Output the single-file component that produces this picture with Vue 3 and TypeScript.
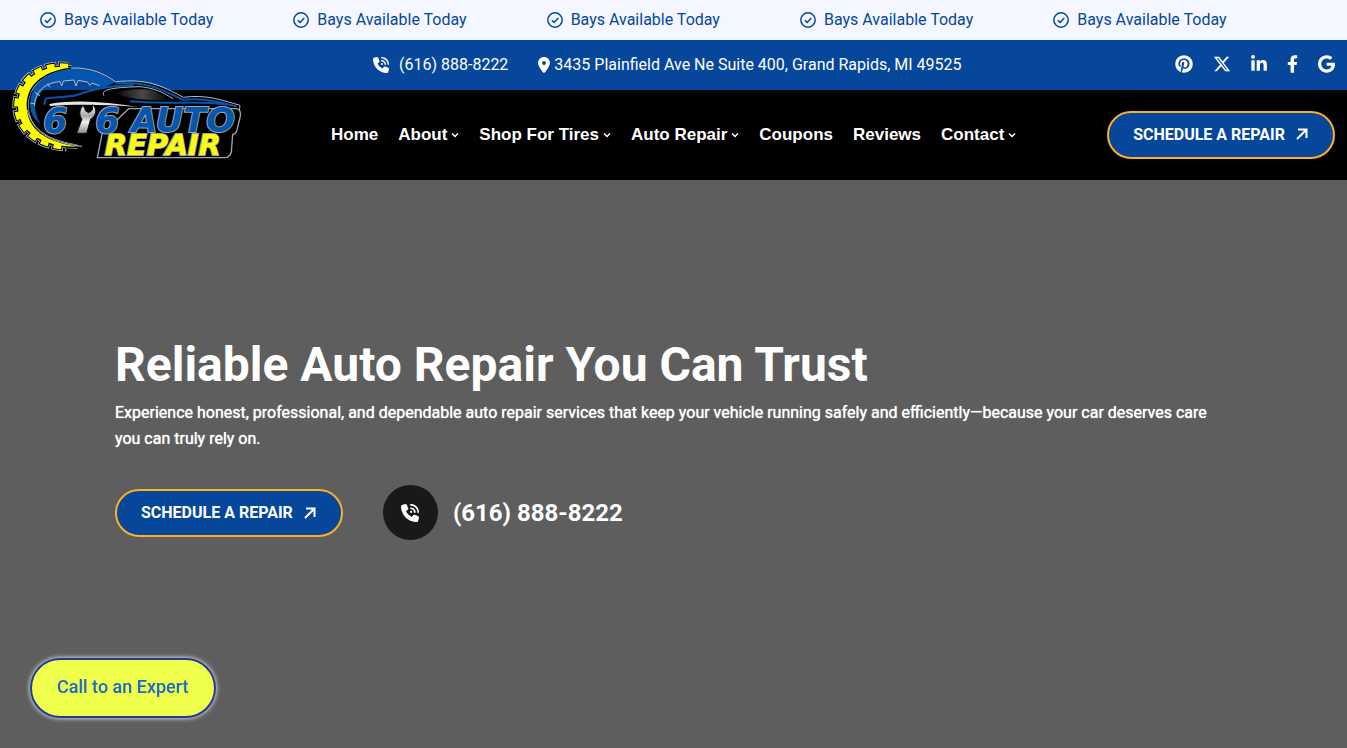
<script setup lang="ts">
interface NavItem {
  label: string
  menu?: boolean
}

interface Social {
  label: string
  box: string
  width: number
  path: string
}

const notices: string[] = Array.from({ length: 5 }, () => 'Bays Available Today')

const navItems: NavItem[] = [
  { label: 'Home' },
  { label: 'About', menu: true },
  { label: 'Shop For Tires', menu: true },
  { label: 'Auto Repair', menu: true },
  { label: 'Coupons' },
  { label: 'Reviews' },
  { label: 'Contact', menu: true },
]

const gearCrescent =
  'M214 52C110 40 54 100 54 168C54 240 120 290 232 290C140 276 80 240 80 166C80 110 120 66 214 52Z'
const gearTeeth = 'M204 48C110 36 49 98 49 168C49 238 112 290 200 292'

const phonePath =
  'M280 0C408.1 0 512 103.9 512 232c0 13.3-10.7 24-24 24s-24-10.7-24-24c0-101.6-82.4-184-184-184c-13.3 0-24-10.7-24-24s10.7-24 24-24zm8 192a32 32 0 1 1 0 64 32 32 0 1 1 0-64zm-32-72c0-13.3 10.7-24 24-24c75.1 0 136 60.9 136 136c0 13.3-10.7 24-24 24s-24-10.7-24-24c0-48.6-39.4-88-88-88c-13.3 0-24-10.7-24-24zM117.5 1.4c19.4-5.3 39.7 4.6 47.4 23.2l40 96c6.8 16.3 2.1 35.2-11.6 46.3L144 207.3c33.3 70.4 90.3 127.4 160.7 160.7L345 318.7c11.2-13.7 30-18.4 46.3-11.6l96 40c18.6 7.7 28.5 28 23.2 47.4l-24 88C481.8 499.9 466 512 448 512C200.6 512 0 311.4 0 64C0 46 12.1 30.2 29.5 25.4l88-24z'

const socials: Social[] = [
  {
    label: 'Pinterest',
    box: '0 0 496 512',
    width: 18,
    path: 'M496 256c0 137-111 248-248 248-25.6 0-50.2-3.9-73.4-11.1 10.1-16.5 25.2-43.5 30.8-65 3-11.6 15.4-59 15.4-59 8.1 15.4 31.7 28.5 56.8 28.5 74.8 0 128.7-68.8 128.7-154.3 0-81.9-66.9-143.2-152.9-143.2-107 0-163.9 71.8-163.9 150.1 0 36.4 19.4 81.7 50.3 96.1 4.7 2.2 7.2 1.2 8.3-3.3.8-3.4 5-20.3 6.9-28.1.6-2.5.3-4.7-1.7-7.1-10.1-12.5-18.3-35.3-18.3-56.6 0-54.7 41.4-107.6 112-107.6 60.9 0 103.6 41.5 103.6 100.9 0 67.1-33.9 113.6-78 113.6-24.3 0-42.6-20.1-36.7-44.8 7-29.5 20.5-61.3 20.5-82.6 0-19-10.2-34.9-31.4-34.9-24.9 0-44.9 25.7-44.9 60.2 0 22 7.4 36.8 7.4 36.8s-24.5 103.8-29 123.2c-5 21.4-3 51.6-.9 71.2C65.4 450.9 0 361.1 0 256 0 119 111 8 248 8s248 111 248 248z',
  },
  {
    label: 'X',
    box: '0 0 512 512',
    width: 18,
    path: 'M389.2 48h70.6L305.6 224.2 487 464H345L233.7 318.6 106.5 464H35.8L200.7 275.5 26.8 48H172.4L272.9 180.9 389.2 48zM364.4 421.8h39.1L151.1 88h-42L364.4 421.8z',
  },
  {
    label: 'LinkedIn',
    box: '0 0 448 512',
    width: 16,
    path: 'M100.28 448H7.4V148.9h92.88zM53.79 108.1C24.09 108.1 0 83.5 0 53.8a53.79 53.79 0 0 1 107.58 0c0 29.7-24.1 54.3-53.79 54.3zM447.9 448h-92.68V302.4c0-34.7-.7-79.2-48.29-79.2-48.29 0-55.69 37.7-55.69 76.7V448h-92.78V148.9h89.08v40.8h1.3c12.4-23.5 42.69-48.3 87.88-48.3 94 0 111.28 61.9 111.28 142.3V448z',
  },
  {
    label: 'Facebook',
    box: '0 0 320 512',
    width: 11,
    path: 'M279.14 288l14.22-92.66h-88.91v-60.13c0-25.35 12.42-50.06 52.24-50.06h40.42V6.26S260.43 0 225.36 0c-73.22 0-121.08 44.38-121.08 124.72v70.62H22.89V288h81.39v224h100.17V288z',
  },
  {
    label: 'Google',
    box: '0 0 488 512',
    width: 17,
    path: 'M488 261.8C488 403.3 391.1 504 248 504 110.8 504 0 393.2 0 256S110.8 8 248 8c66.8 0 123 24.5 166.3 64.9l-67.5 64.9C258.5 52.6 94.3 116.6 94.3 256c0 86.5 69.1 156.6 153.7 156.6 98.2 0 135-70.4 140.8-106.9H248v-85.3h236.1c2.3 12.7 3.9 24.9 3.9 41.4z',
  },
]
</script>

<template>
  <div class="page">
    <div class="notices">
      <span v-for="(notice, i) in notices" :key="i" class="notice">
        <svg class="notice-icon" viewBox="0 0 16 16" aria-hidden="true">
          <circle cx="8" cy="8" r="7.2" />
          <path d="M4.8 8.2l2.3 2.2 4.2-4.5" />
        </svg>
        <span class="label">{{ notice }}</span>
      </span>
    </div>

    <header class="header">
      <a class="logo" href="#" aria-label="616 Auto Repair">
        <svg viewBox="36 33 696 294" aria-hidden="true">
          <defs>
            <linearGradient id="steel" x1="0" y1="0" x2="0" y2="1">
              <stop offset="0" stop-color="#f2f2f2" />
              <stop offset="0.4" stop-color="#a8a8a8" />
              <stop offset="0.6" stop-color="#f2f2f2" />
              <stop offset="1" stop-color="#8a8a8a" />
            </linearGradient>
            <linearGradient id="glass" x1="0" y1="0" x2="1" y2="0">
              <stop offset="0" stop-color="#000" />
              <stop offset="0.5" stop-color="#4a4a4a" />
              <stop offset="1" stop-color="#000" />
            </linearGradient>
          </defs>
          <g class="gear gear-silver"><path class="teeth" :d="gearTeeth" /><path class="ring" :d="gearCrescent" /></g>
          <g class="gear gear-black"><path class="teeth" :d="gearTeeth" /><path class="ring" :d="gearCrescent" /></g>
          <g class="gear gear-yellow"><path class="teeth" :d="gearTeeth" /><path class="ring" :d="gearCrescent" /></g>
          <path class="blue" d="M90 160C94 100 140 62 214 56C270 56 312 76 346 97L306 112C276 98 240 92 206 92C150 94 112 124 104 168C106 190 112 206 122 222C98 204 90 186 90 160Z" />
          <path class="body" d="M130 168L138 142L224 136L306 116L346 97C430 88 480 106 548 141C620 134 660 146 718 168L724 182H130Z" />
          <path class="wire" d="M104 168C104 128 132 98 180 95L185 108L190 93L222 90L228 108L234 91L262 96L270 106L276 99L298 107M92 160L104 161M106 128L120 137M142 101L150 112" />
          <path class="blue-line" d="M132 164L138 145L224 137C280 118 330 105 400 106M346 100C430 94 470 110 548 149C610 143 660 154 710 170M390 154C500 165 590 150 680 164" />
          <path class="car-glass" d="M342 130C380 116 430 115 462 122L510 150C440 154 380 144 342 130Z" />
          <path class="wire" d="M214 54C270 52 312 70 346 95C440 86 480 104 550 142C620 132 670 152 720 166L718 182M312 137C300 118 340 112 420 110C480 116 502 138 520 146" />
          <path class="steel-line" d="M148 162C230 148 320 156 414 171C320 163 220 162 150 168Z" />
          <path class="wire" d="M82 180C96 240 144 278 246 289" />
          <path class="panel" d="M386 176L708 176Q724 178 721 198L711 240Q707 252 698 254L694 306Q690 321 676 323L292 323L306 253Z" />
          <g class="word">
            <text class="fill-blue" x="130" y="248" font-size="104">6</text>
            <text class="fill-blue" x="286" y="248" font-size="104">6</text>
            <text class="fill-yellow" x="314" y="315" font-size="87">REPAIR</text>
            <text class="fill-blue" x="394" y="246" font-size="101">AUTO</text>
          </g>
          <path class="wrench" d="M250 166L257 183L266 188L277 180L278 164C292 176 290 198 272 207L260 250L230 250L246 207C236 196 238 178 250 166Z" />
        </svg>
      </a>

      <div class="topbar">
        <div class="contacts">
          <a class="phone" href="tel:6168888222">
            <svg class="phone-icon" viewBox="0 0 512 512" aria-hidden="true"><path :d="phonePath" /></svg>
            <span class="label">(616) 888-8222</span>
          </a>
          <a class="address" href="#">
            <svg class="pin-icon" viewBox="0 0 384 512" aria-hidden="true">
              <path d="M215.7 499.2C267 435 384 279.4 384 192C384 86 298 0 192 0S0 86 0 192c0 87.4 117 243 168.3 307.2c12.3 15.3 35.1 15.3 47.4 0zM192 128a64 64 0 1 1 0 128 64 64 0 1 1 0-128z" />
            </svg>
            <span class="label">3435 Plainfield Ave Ne Suite 400, Grand Rapids, MI 49525</span>
          </a>
        </div>
        <div class="socials">
          <a v-for="s in socials" :key="s.label" href="#" :aria-label="s.label">
            <svg :viewBox="s.box" :width="s.width" height="18" aria-hidden="true"><path :d="s.path" /></svg>
          </a>
        </div>
      </div>

      <div class="navbar">
        <nav class="nav">
          <a v-for="item in navItems" :key="item.label" href="#">
            {{ item.label }}
            <svg v-if="item.menu" class="chevron" viewBox="0 0 8 8" aria-hidden="true"><path d="M1 2.5l3 3 3-3" /></svg>
          </a>
        </nav>
        <a class="cta" href="#">
          SCHEDULE A REPAIR
          <svg class="arrow" viewBox="0 0 12 12" aria-hidden="true"><path d="M1 11L10.500 1.500M2 1.500h8.500v8.500" /></svg>
        </a>
      </div>
    </header>

    <main class="hero">
      <h1>Reliable Auto Repair You Can Trust</h1>
      <p>
        Experience honest, professional, and dependable auto repair services that keep your vehicle
        running safely and efficiently—because your car deserves care you can truly rely on.
      </p>
      <div class="actions">
        <a class="cta" href="#">
          SCHEDULE A REPAIR
          <svg class="arrow" viewBox="0 0 12 12" aria-hidden="true"><path d="M1 11L10.500 1.500M2 1.500h8.500v8.500" /></svg>
        </a>
        <a class="call" href="tel:6168888222">
          <span class="call-disc">
            <svg viewBox="0 0 512 512" aria-hidden="true"><path :d="phonePath" /></svg>
          </span>
          (616) 888-8222
        </a>
      </div>
    </main>

    <a class="expert" href="tel:6168888222">Call to an Expert</a>
  </div>
</template>

<style>
body {
  margin: 0;
  background: #5e5e5e;
}
</style>

<style scoped>
.page {
  display: flex;
  flex-direction: column;
  min-height: 100vh;
  overflow: hidden;
  background: #5e5e5e;
  color: #fff;
  font-family: Roboto, "Liberation Sans", sans-serif;
  font-size: 16px;
}

.page * {
  box-sizing: border-box;
}

a {
  color: inherit;
  text-decoration: none;
}

svg {
  display: block;
  flex: none;
  fill: currentColor;
}

.notices {
  display: flex;
  gap: 80px;
  height: 40px;
  padding: 0 40px;
  background: #f4f7ff;
  color: #06469b;
}

.notice {
  display: flex;
  flex: none;
  align-items: center;
  gap: 8px;
  white-space: nowrap;
}

.label {
  padding-bottom: 2px;
}

.notice-icon {
  width: 16px;
  height: 16px;
  fill: none;
  stroke: currentColor;
  stroke-width: 1.5;
}

.header {
  position: relative;
}

.logo {
  position: absolute;
  top: 21px;
  left: 12px;
  width: 232px;
}

.logo svg {
  overflow: visible;
}

.topbar {
  display: flex;
  align-items: center;
  justify-content: space-between;
  height: 50px;
  padding: 0 12px 0 373px;
  background: #06469b;
}

.contacts {
  display: flex;
  gap: 30px;
  white-space: nowrap;
}

.phone,
.address {
  display: flex;
  align-items: center;
  gap: 10px;
}

.address {
  gap: 4px;
}

.phone-icon {
  width: 16px;
  height: 16px;
}

.pin-icon {
  width: 12px;
  height: 16px;
}

.socials {
  display: flex;
  align-items: center;
  gap: 20px;
  padding-bottom: 2px;
}

.navbar {
  display: flex;
  align-items: center;
  justify-content: space-between;
  height: 90px;
  padding: 0 12px 0 331px;
  background: #000;
}

.nav {
  display: flex;
  gap: 20px;
  font-family: "Liberation Sans", Arial, sans-serif;
  font-size: 17px;
  font-weight: 700;
  white-space: nowrap;
}

.nav a {
  display: flex;
  align-items: center;
  gap: 4px;
}

.chevron {
  width: 8px;
  height: 8px;
  fill: none;
  stroke: currentColor;
  stroke-width: 1.5;
}

.cta {
  display: flex;
  align-items: center;
  gap: 11px;
  height: 48px;
  padding: 0 25px 2px 24px;
  border: 2px solid #fdb021;
  border-radius: 24px;
  background: #06469b;
  font-weight: 700;
  white-space: nowrap;
}

.actions .cta {
  padding-bottom: 0;
}

.arrow {
  width: 12px;
  height: 12px;
  fill: none;
  stroke: currentColor;
  stroke-width: 2;
}

.hero {
  flex: 1;
  padding: 156px 115px 40px;
}

h1 {
  margin: 0;
  font-size: 48px;
  line-height: 58px;
  font-weight: 700;
}

p {
  margin: 6px 0 33px;
  line-height: 26px;
  text-shadow: 0 0 1px currentColor;
}

.actions {
  display: flex;
  align-items: center;
  gap: 40px;
}

.call {
  display: flex;
  align-items: center;
  gap: 15px;
  font-size: 24px;
  font-weight: 700;
}

.call-disc {
  display: grid;
  place-items: center;
  width: 55px;
  height: 55px;
  border-radius: 50%;
  background: #191919;
}

.call-disc svg {
  width: 18px;
  height: 18px;
}

.expert {
  position: fixed;
  bottom: 30px;
  left: 30px;
  padding: 0 25px 2px;
  border: 2px solid #1f3c96;
  border-radius: 30px;
  background: #f0ff4b;
  box-shadow: 0 0 5px #fff;
  color: #1b69c8;
  font-size: 18px;
  font-weight: 500;
  line-height: 54px;
}

.gear .teeth {
  fill: none;
}

.gear-silver {
  fill: #b4bcc8;
  stroke: #b4bcc8;
}

.gear-silver .teeth {
  stroke-width: 24;
  stroke-dasharray: 34 6;
  stroke-dashoffset: 5;
}

.gear-silver .ring {
  stroke-width: 12;
}

.gear-black {
  fill: #000;
  stroke: #000;
}

.gear-black .teeth {
  stroke-width: 19;
  stroke-dasharray: 30 10;
  stroke-dashoffset: 3;
}

.gear-black .ring {
  stroke-width: 8;
}

.gear-yellow {
  fill: #fbfc04;
}

.gear-yellow .teeth {
  stroke: #fbfc04;
  stroke-width: 13;
  stroke-dasharray: 24 16;
}

.body {
  fill: #000;
}

.blue {
  fill: #0756ad;
}

.wire {
  fill: none;
  stroke: #b4bcc8;
  stroke-width: 3;
}

.blue-line {
  fill: none;
  stroke: #0756ad;
  stroke-width: 6;
}

.car-glass {
  fill: url(#glass);
}

.steel-line {
  fill: #e5e5e5;
}

.panel {
  fill: #000;
  stroke: #9fa4ab;
  stroke-width: 4;
}

.word {
  font-family: "DejaVu Sans", sans-serif;
  font-style: italic;
  font-weight: 700;
  paint-order: stroke;
  stroke: #9fa4ab;
  stroke-width: 6;
}

.fill-blue {
  fill: #0756ad;
}

.fill-yellow {
  fill: #fbfc04;
}

.wrench {
  fill: url(#steel);
  stroke: #111;
  stroke-width: 3;
}
</style>
